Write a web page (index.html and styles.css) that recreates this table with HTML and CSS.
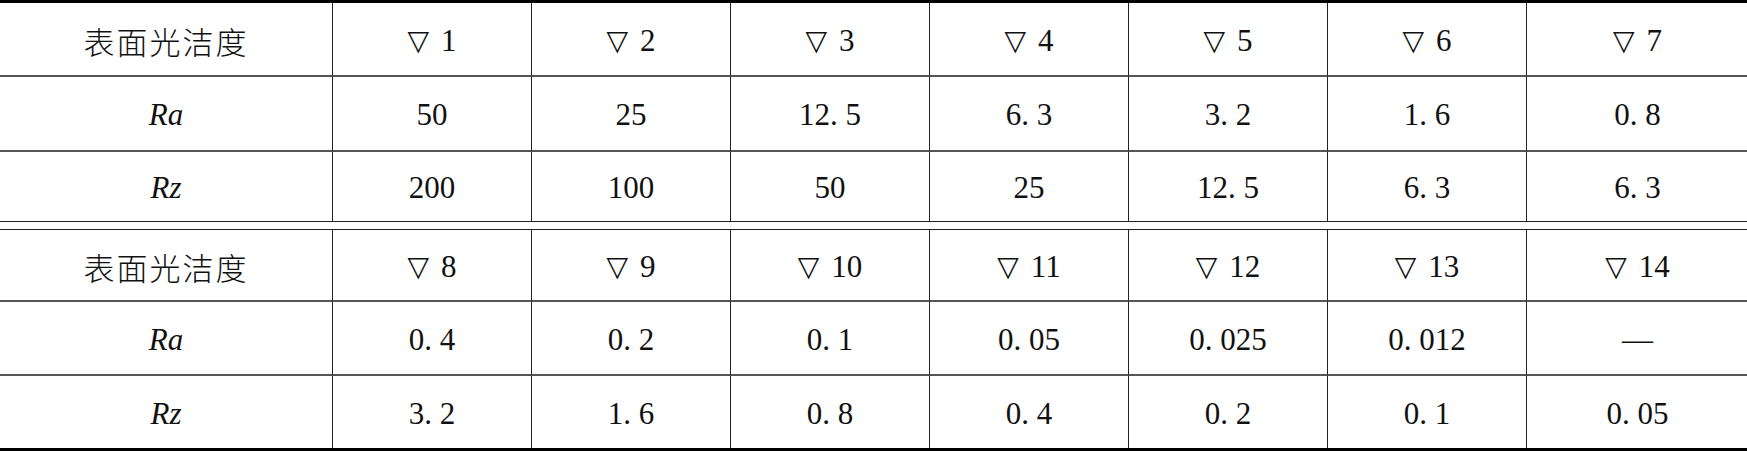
FILE: index.html
```html
<!DOCTYPE html>
<html lang="en">
<head>
    <meta charset="UTF-8">
    <meta name="viewport" content="width=device-width, initial-scale=1.0">
    <title>表面光洁度</title>
    <link rel="stylesheet" href="styles.css">
</head>
<body>
    <div class="roughness">
        <div class="block block-top">
            <div class="cell head cn">表面光洁度</div>
            <div class="cell head"><span class="mark">▽</span>1</div>
            <div class="cell head"><span class="mark">▽</span>2</div>
            <div class="cell head"><span class="mark">▽</span>3</div>
            <div class="cell head"><span class="mark">▽</span>4</div>
            <div class="cell head"><span class="mark">▽</span>5</div>
            <div class="cell head"><span class="mark">▽</span>6</div>
            <div class="cell head"><span class="mark">▽</span>7</div>

            <div class="cell mid label">Ra</div>
            <div class="cell mid">50</div>
            <div class="cell mid">25</div>
            <div class="cell mid">12. 5</div>
            <div class="cell mid">6. 3</div>
            <div class="cell mid">3. 2</div>
            <div class="cell mid">1. 6</div>
            <div class="cell mid">0. 8</div>

            <div class="cell last label">Rz</div>
            <div class="cell last">200</div>
            <div class="cell last">100</div>
            <div class="cell last">50</div>
            <div class="cell last">25</div>
            <div class="cell last">12. 5</div>
            <div class="cell last">6. 3</div>
            <div class="cell last">6. 3</div>
        </div>

        <div class="block block-bottom">
            <div class="cell head cn">表面光洁度</div>
            <div class="cell head"><span class="mark">▽</span>8</div>
            <div class="cell head"><span class="mark">▽</span>9</div>
            <div class="cell head"><span class="mark">▽</span>10</div>
            <div class="cell head"><span class="mark">▽</span>11</div>
            <div class="cell head"><span class="mark">▽</span>12</div>
            <div class="cell head"><span class="mark">▽</span>13</div>
            <div class="cell head"><span class="mark">▽</span>14</div>

            <div class="cell mid label">Ra</div>
            <div class="cell mid">0. 4</div>
            <div class="cell mid">0. 2</div>
            <div class="cell mid">0. 1</div>
            <div class="cell mid">0. 05</div>
            <div class="cell mid">0. 025</div>
            <div class="cell mid">0. 012</div>
            <div class="cell mid">—</div>

            <div class="cell last label">Rz</div>
            <div class="cell last">3. 2</div>
            <div class="cell last">1. 6</div>
            <div class="cell last">0. 8</div>
            <div class="cell last">0. 4</div>
            <div class="cell last">0. 2</div>
            <div class="cell last">0. 1</div>
            <div class="cell last">0. 05</div>
        </div>
    </div>
</body>
</html>
```

FILE: styles.css
```css
body {
  margin: 0;
  background-color: white;
  color: #111;
  font-family: "Liberation Serif", "Times New Roman", serif;
}

.roughness {
  width: 1747px;
}

.block {
  display: grid;
  grid-template-columns: 332px repeat(6, 199px) 222px;
}

.block-top {
  border-top: 3px solid #000;
  border-bottom: 1px solid #222;
  grid-template-rows: 74px 75px 69px;
}

.block-bottom {
  margin-top: 7px;
  border-top: 1px solid #222;
  border-bottom: 3px solid #000;
  grid-template-rows: 72px 74px 72px;
}

.cell {
  box-sizing: border-box;
  display: flex;
  align-items: center;
  justify-content: center;
  border-left: 1px solid #222;
  font-size: 31px;
  padding-top: 3px;
}

.cell:nth-child(8n+1) {
  border-left: none;
}

.head,
.mid {
  border-bottom: 2px solid #555;
}

.cn {
  font-family: "Noto Sans CJK SC", sans-serif;
  font-size: 31px;
  letter-spacing: 2px;
  font-weight: 300;
}

.label {
  font-style: italic;
}

.mark {
  font-family: "DejaVu Sans", sans-serif;
  font-size: 28px;
  margin-right: 12px;
}
```
